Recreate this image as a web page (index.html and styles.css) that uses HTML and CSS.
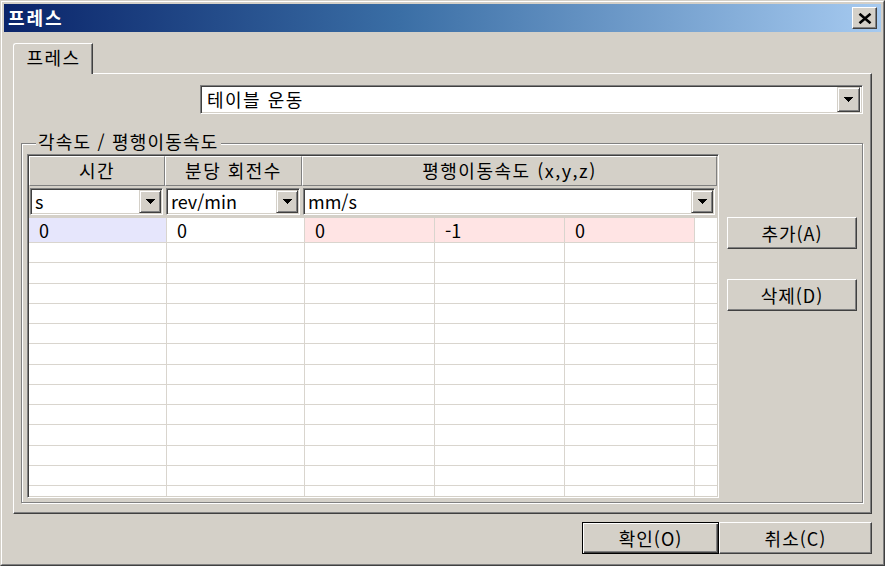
FILE: index.html
```html
<!DOCTYPE html>
<html lang="ko">
<head>
<meta charset="utf-8">
<title>프레스</title>
<link rel="stylesheet" href="styles.css">
</head>
<body>
<div class="window">
  <div class="frame">
    <div class="titlebar">
      <span class="title">프레스</span>
      <div class="close">
        <svg width="14" height="11" viewBox="0 0 14 11"><path d="M1.5 0.8 L12.5 10.2 M12.5 0.8 L1.5 10.2" stroke="#000" stroke-width="2.6" fill="none"/></svg>
      </div>
    </div>
    <div class="client">
      <div class="tabs"><div class="tab">프레스</div></div>
      <div class="panel">
        <div class="combo main-combo">
          <div class="combo-text">테이블 운동</div>
          <div class="combo-btn"><svg width="9" height="5" viewBox="0 0 9 5"><path d="M0 0h9v1H0zM1 1h7v1H1zM2 2h5v1H2zM3 3h3v1H3zM4 4h1v1H4z" fill="#000"/></svg></div>
        </div>
        <div class="group">
          <div class="group-label">각속도 / 평행이동속도</div>
          <div class="group-body">
            <div class="grid">
              <div class="hrow">
                <div class="hcell c1">시간</div>
                <div class="hcell c2">분당 회전수</div>
                <div class="hcell c3">평행이동속도 (x,y,z)</div>
              </div>
              <div class="crow">
                <div class="ccell c1">
                  <div class="combo small-combo">
                    <div class="combo-text">s</div>
                    <div class="combo-btn"><svg width="9" height="5" viewBox="0 0 9 5"><path d="M0 0h9v1H0zM1 1h7v1H1zM2 2h5v1H2zM3 3h3v1H3zM4 4h1v1H4z" fill="#000"/></svg></div>
                  </div>
                </div>
                <div class="ccell c2">
                  <div class="combo small-combo">
                    <div class="combo-text">rev/min</div>
                    <div class="combo-btn"><svg width="9" height="5" viewBox="0 0 9 5"><path d="M0 0h9v1H0zM1 1h7v1H1zM2 2h5v1H2zM3 3h3v1H3zM4 4h1v1H4z" fill="#000"/></svg></div>
                  </div>
                </div>
                <div class="ccell c3">
                  <div class="combo small-combo">
                    <div class="combo-text">mm/s</div>
                    <div class="combo-btn"><svg width="9" height="5" viewBox="0 0 9 5"><path d="M0 0h9v1H0zM1 1h7v1H1zM2 2h5v1H2zM3 3h3v1H3zM4 4h1v1H4z" fill="#000"/></svg></div>
                  </div>
                </div>
              </div>
              <div class="data">
                <div class="cell first time">0</div><div class="cell first">0</div><div class="cell first vel">0</div><div class="cell first vel">-1</div><div class="cell first vel">0</div><div class="cell first last"></div>
                <div class="cell"></div><div class="cell"></div><div class="cell"></div><div class="cell"></div><div class="cell"></div><div class="cell last"></div>
                <div class="cell"></div><div class="cell"></div><div class="cell"></div><div class="cell"></div><div class="cell"></div><div class="cell last"></div>
                <div class="cell"></div><div class="cell"></div><div class="cell"></div><div class="cell"></div><div class="cell"></div><div class="cell last"></div>
                <div class="cell"></div><div class="cell"></div><div class="cell"></div><div class="cell"></div><div class="cell"></div><div class="cell last"></div>
                <div class="cell"></div><div class="cell"></div><div class="cell"></div><div class="cell"></div><div class="cell"></div><div class="cell last"></div>
                <div class="cell"></div><div class="cell"></div><div class="cell"></div><div class="cell"></div><div class="cell"></div><div class="cell last"></div>
                <div class="cell"></div><div class="cell"></div><div class="cell"></div><div class="cell"></div><div class="cell"></div><div class="cell last"></div>
                <div class="cell"></div><div class="cell"></div><div class="cell"></div><div class="cell"></div><div class="cell"></div><div class="cell last"></div>
                <div class="cell"></div><div class="cell"></div><div class="cell"></div><div class="cell"></div><div class="cell"></div><div class="cell last"></div>
                <div class="cell"></div><div class="cell"></div><div class="cell"></div><div class="cell"></div><div class="cell"></div><div class="cell last"></div>
                <div class="cell"></div><div class="cell"></div><div class="cell"></div><div class="cell"></div><div class="cell"></div><div class="cell last"></div>
                <div class="cell"></div><div class="cell"></div><div class="cell"></div><div class="cell"></div><div class="cell"></div><div class="cell last"></div>
                <div class="cell"></div><div class="cell"></div><div class="cell"></div><div class="cell"></div><div class="cell"></div><div class="cell last"></div>
              </div>
            </div>
            <div class="side">
              <button class="btn side-btn">추가(A)</button>
              <button class="btn side-btn">삭제(D)</button>
            </div>
          </div>
        </div>
      </div>
      <div class="footer">
        <button class="btn default ok">확인(O)</button>
        <button class="btn cancel">취소(C)</button>
      </div>
    </div>
  </div>
</div>
</body>
</html>
```

FILE: styles.css
```css
* { box-sizing: border-box; }

body {
  margin: 0;
  background: #d4d0c8;
  font-family: "Noto Sans CJK KR", "Noto Sans", sans-serif;
  font-size: 18px;
  color: #000;
}

.window {
  width: 885px;
  height: 566px;
  border: 1px solid;
  border-color: #d4d0c8 #404040 #404040 #d4d0c8;
  background: #d4d0c8;
}

.frame {
  height: 100%;
  border: 1px solid;
  border-color: #fff #808080 #808080 #fff;
  padding: 2px;
  display: flex;
  flex-direction: column;
}

.titlebar {
  flex: none;
  height: 28px;
  background: linear-gradient(to right, #0a246a 0%, #3a6ea5 45%, #a6caf0 100%);
  display: flex;
  align-items: center;
  justify-content: space-between;
  padding: 0 4px 0 4px;
}

.title {
  color: #fff;
  font-weight: bold;
  line-height: 28px;
  margin-top: -3px;
  letter-spacing: 2px;
}

.close {
  width: 25px;
  height: 22px;
  background: #d4d0c8;
  border: 1px solid;
  border-color: #fff #404040 #404040 #fff;
  box-shadow: inset -1px -1px 0 #808080;
  display: flex;
  align-items: center;
  justify-content: center;
}

.client {
  flex: 1;
  padding: 11px 9px 0 9px;
  display: flex;
  flex-direction: column;
}

.tabs {
  height: 30px;
  display: flex;
}

.tab {
  position: relative;
  z-index: 1;
  width: 80px;
  height: 31px;
  background: #d4d0c8;
  border-left: 1px solid #fff;
  border-top: 1px solid #fff;
  border-right: 1px solid #404040;
  border-top-left-radius: 3px;
  box-shadow: inset -1px 0 0 #808080;
  text-align: center;
  line-height: 26px;
  letter-spacing: 1.5px;
  padding-left: 1px;
}

.panel {
  height: 441px;
  border: 1px solid;
  border-color: #fff #404040 #404040 #fff;
  box-shadow: inset -1px -1px 0 #808080;
  padding: 11px 0 0 7px;
}

.combo {
  display: flex;
  background: #fff;
  border: 1px solid;
  border-color: #808080 #fff #fff #808080;
  box-shadow: inset 1px 1px 0 #404040, inset -1px -1px 0 #d4d0c8;
  padding: 1px;
}

.combo-text {
  flex: 1;
  padding-left: 4px;
  white-space: nowrap;
}

.combo-btn {
  flex: none;
  background: #d4d0c8;
  border: 1px solid;
  border-color: #d4d0c8 #404040 #404040 #d4d0c8;
  box-shadow: inset 1px 1px 0 #fff, inset -1px -1px 0 #808080;
  display: flex;
  align-items: center;
  justify-content: center;
}

.main-combo {
  margin-left: 179px;
  width: 663px;
  height: 29px;
}

.main-combo .combo-text {
  line-height: 25px;
  padding-left: 5px;
  letter-spacing: 1.5px;
}

.main-combo .combo-btn {
  width: 23px;
  margin-right: 1px;
}

.group {
  margin-top: 29px;
  width: 842px;
  border: 1px solid #808080;
  box-shadow: inset 1px 1px 0 #fff, 1px 1px 0 #fff;
  padding: 0 0 4px 5px;
}

.group-label {
  margin: -13px 0 0 9px;
  padding: 0 2px;
  width: fit-content;
  height: 20px;
  line-height: 20px;
  background: #d4d0c8;
  letter-spacing: 1.2px;
}

.group-body {
  display: flex;
  margin-top: 3px;
}

.grid {
  width: 692px;
  height: 344px;
  border: 1px solid;
  border-color: #808080 #fff #fff #808080;
  box-shadow: inset 1px 1px 0 #404040, inset -1px -1px 0 #d4d0c8;
  padding: 1px;
  display: flex;
  flex-direction: column;
  overflow: hidden;
}

.c1 { width: 136px; }
.c2 { width: 137px; }
.c3 { width: 415px; }

.hrow {
  flex: none;
  display: flex;
  height: 30px;
}

.hcell {
  background: #d4d0c8;
  border: 1px solid;
  border-color: #fff #808080 #808080 #fff;
  text-align: center;
  line-height: 26px;
  white-space: nowrap;
  letter-spacing: 1.5px;
}

.crow {
  flex: none;
  display: flex;
  height: 32px;
  background: #d4d0c8;
}

.ccell {
  padding: 2px 2px 0 1px;
}

.small-combo {
  height: 27px;
}

.small-combo .combo-text {
  line-height: 23px;
  padding-left: 3px;
}

.small-combo .combo-btn {
  width: 22px;
}

.data {
  flex: 1;
  display: grid;
  grid-template-columns: 138px 138px 130px 130px 130px 22px;
  grid-template-rows: 25px;
  grid-auto-rows: 20.25px;
  background: #fff;
  overflow: hidden;
}

.cell {
  border-right: 1px solid #d9d5ce;
  border-bottom: 1px solid #d9d5ce;
  padding-left: 10px;
}

.cell.first {
  line-height: 24px;
}

.cell.last {
  border-right: none;
}

.cell.time {
  background: #e6e6fc;
}

.cell.vel {
  background: #ffe4e4;
}

.side {
  display: flex;
  flex-direction: column;
  gap: 30px;
  margin-left: 8px;
  padding-top: 63px;
}

.btn {
  font: inherit;
  color: #000;
  padding: 0;
  background: #d4d0c8;
  border: 1px solid;
  border-color: #fff #404040 #404040 #fff;
  box-shadow: inset -1px -1px 0 #808080;
  line-height: 26px;
  letter-spacing: 1px;
}

.side-btn {
  width: 130px;
  height: 32px;
}

.footer {
  display: flex;
  justify-content: flex-end;
  margin-top: 8px;
}

.ok {
  width: 137px;
  height: 32px;
}

.btn.default {
  border: 1px solid #000;
  box-shadow: inset 1px 1px 0 #fff, inset -1px -1px 0 #404040, inset -2px -2px 0 #808080;
}

.cancel {
  width: 153px;
  height: 32px;
}
```
